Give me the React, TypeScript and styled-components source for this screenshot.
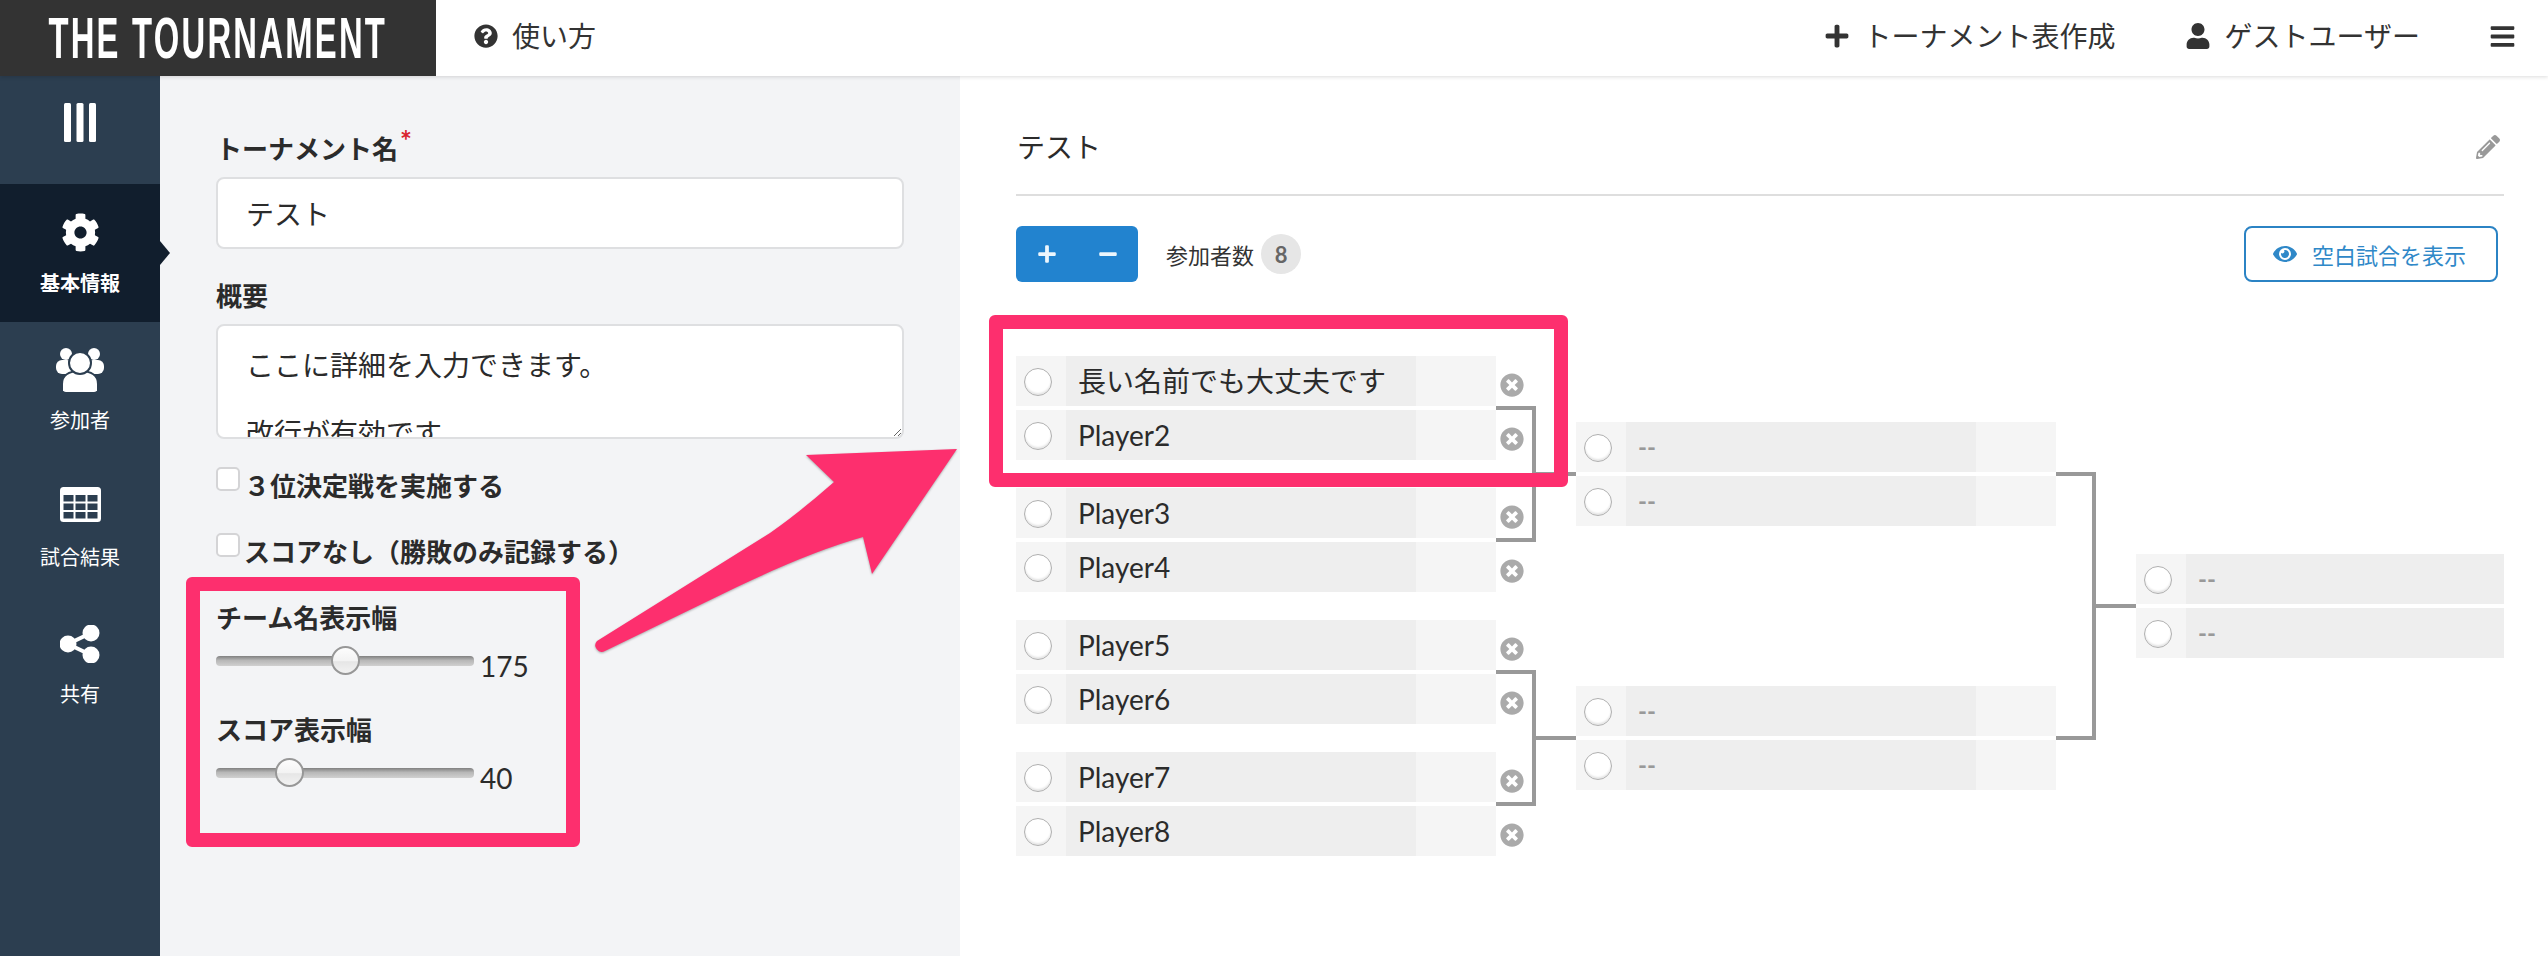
import React from "react";
import styled, { createGlobalStyle } from "styled-components";
import {
  FaBars,
  FaCog,
  FaEye,
  FaMinus,
  FaPencilAlt,
  FaPlus,
  FaQuestionCircle,
  FaTimesCircle,
  FaUser,
} from "react-icons/fa";

const PINK = "#fd2f6e";
const FONT = `Lato, "Noto Sans CJK JP", sans-serif`;

const GlobalStyle = createGlobalStyle`
  html, body {
    margin: 0;
    padding: 0;
    background: #fff;
  }
  body {
    font-family: ${FONT};
    color: #2b2b2b;
  }
  * {
    box-sizing: border-box;
  }
`;

function UsersIcon() {
  return (
    <svg width="48" height="44" viewBox="0 0 48 44" fill="#fff">
      <circle cx="10" cy="6" r="6" />
      <circle cx="38" cy="6" r="6" />
      <rect x="0" y="12" width="17" height="14" rx="6" />
      <rect x="31" y="12" width="17" height="14" rx="6" />
      <path
        d="M6 44V36C6 28 12 23 24 23S42 28 42 36V44Z"
        stroke="#2c3e50"
        strokeWidth="2"
      />
      <rect x="7" y="37" width="34" height="7" rx="3" />
      <circle cx="24" cy="15" r="11" stroke="#2c3e50" strokeWidth="2" />
    </svg>
  );
}

function TableIcon() {
  return (
    <svg width="41" height="44" viewBox="0 0 41 44">
      <rect x="0" y="2" width="41" height="35" rx="3.5" fill="#fff" />
      <g fill="#2c3e50">
        <rect x="3.5" y="10" width="10" height="6.5" />
        <rect x="15.5" y="10" width="10" height="6.5" />
        <rect x="27.5" y="10" width="10" height="6.5" />
        <rect x="3.5" y="18.5" width="10" height="6.5" />
        <rect x="15.5" y="18.5" width="10" height="6.5" />
        <rect x="27.5" y="18.5" width="10" height="6.5" />
        <rect x="3.5" y="27" width="10" height="6.5" />
        <rect x="15.5" y="27" width="10" height="6.5" />
        <rect x="27.5" y="27" width="10" height="6.5" />
      </g>
    </svg>
  );
}

function ShareIcon() {
  return (
    <svg width="40" height="38" viewBox="0 0 40 38" fill="#fff">
      <path d="M31 8L8 19L31 30" fill="none" stroke="#fff" strokeWidth="4" />
      <circle cx="31" cy="8" r="8.5" />
      <circle cx="8" cy="19" r="8.5" />
      <circle cx="31" cy="30" r="8.5" />
    </svg>
  );
}

function ColumnsIcon() {
  return (
    <svg width="32" height="39" viewBox="0 0 32 39" fill="#fff">
      <rect x="0" width="7" height="39" rx="1.5" />
      <rect x="12.5" width="7" height="39" rx="1.5" />
      <rect x="25" width="7" height="39" rx="1.5" />
    </svg>
  );
}

const NAV_ITEMS = [
  { label: "基本情報", icon: <FaCog size={39} />, active: true },
  { label: "参加者", icon: <UsersIcon /> },
  { label: "試合結果", icon: <TableIcon /> },
  { label: "共有", icon: <ShareIcon /> },
];

const ROUNDS = [
  {
    matches: [
      ["長い名前でも大丈夫です", "Player2"],
      ["Player3", "Player4"],
      ["Player5", "Player6"],
      ["Player7", "Player8"],
    ],
  },
  {
    matches: [
      ["--", "--"],
      ["--", "--"],
    ],
  },
  { matches: [["--", "--"]], final: true },
];

function Row({
  name,
  first,
  final,
}: {
  name: string;
  first?: boolean;
  final?: boolean;
}) {
  return (
    <TeamRow>
      <SeedCell>
        <Radio />
      </SeedCell>
      <NameCell $final={final} $empty={name === "--"}>
        {name}
      </NameCell>
      {!final && <ScoreCell />}
      {first && (
        <RemoveButton>
          <FaTimesCircle size={24} />
        </RemoveButton>
      )}
    </TeamRow>
  );
}

function Links({ count }: { count: number }) {
  return (
    <LinkColumn>
      {Array.from({ length: count }).map((_, i) => (
        <LinkSlot key={i}>
          <Fork $height={528 / count / 2 + 4} />
          <Stem />
        </LinkSlot>
      ))}
    </LinkColumn>
  );
}

export default function App() {
  return (
    <>
      <GlobalStyle />
      <Page>
        <Header>
          <Logo>
            <LogoText>THE TOURNAMENT</LogoText>
          </Logo>
          <HeaderNav>
            <HeaderLink>
              <FaQuestionCircle size={24} />
              使い方
            </HeaderLink>
            <HeaderRight>
              <HeaderLink>
                <FaPlus size={26} />
                トーナメント表作成
              </HeaderLink>
              <HeaderLink>
                <FaUser size={26} />
                ゲストユーザー
              </HeaderLink>
              <HeaderLink>
                <FaBars size={27} />
              </HeaderLink>
            </HeaderRight>
          </HeaderNav>
        </Header>

        <Body>
          <Sidebar>
            <SidebarToggle>
              <ColumnsIcon />
            </SidebarToggle>
            {NAV_ITEMS.map((item) => (
              <NavItem key={item.label} $active={item.active}>
                <NavIcon>{item.icon}</NavIcon>
                <NavLabel $active={item.active}>{item.label}</NavLabel>
              </NavItem>
            ))}
          </Sidebar>

          <FormPanel>
            <FieldLabel>
              トーナメント名<Required>*</Required>
            </FieldLabel>
            <TextInput defaultValue="テスト" />
            <FieldLabel $top={29}>概要</FieldLabel>
            <TextArea
              defaultValue={"ここに詳細を入力できます。\n\n改行が有効です。"}
            />
            <CheckRow $top={28}>
              <CheckBox />
              <CheckText>３位決定戦を実施する</CheckText>
            </CheckRow>
            <CheckRow $top={42}>
              <CheckBox />
              <CheckText>スコアなし（勝敗のみ記録する）</CheckText>
            </CheckRow>
            <FieldLabel $top={43}>チーム名表示幅</FieldLabel>
            <SliderRow>
              <Slider type="range" min={50} max={300} defaultValue={175} />
              <SliderValue>175</SliderValue>
            </SliderRow>
            <FieldLabel $top={16}>スコア表示幅</FieldLabel>
            <SliderRow>
              <Slider type="range" min={20} max={98} defaultValue={40} />
              <SliderValue>40</SliderValue>
            </SliderRow>
          </FormPanel>

          <BoardPanel>
            <TitleRow>
              <Title>テスト</Title>
              <EditIcon>
                <FaPencilAlt size={24} />
              </EditIcon>
            </TitleRow>
            <Toolbar>
              <CountButtons>
                <CountButton>
                  <FaPlus size={20} />
                </CountButton>
                <CountButton>
                  <FaMinus size={20} />
                </CountButton>
              </CountButtons>
              <CountLabel>参加者数</CountLabel>
              <CountBadge>8</CountBadge>
              <GhostButton>
                <FaEye size={24} />
                空白試合を表示
              </GhostButton>
            </Toolbar>
            <Bracket>
              {ROUNDS.map((round, r) => (
                <React.Fragment key={r}>
                  <RoundColumn $final={round.final}>
                    {round.matches.map((match, m) => (
                      <MatchSlot key={m}>
                        <Match>
                          {match.map((name, t) => (
                            <Row
                              key={t}
                              name={name}
                              first={r === 0}
                              final={round.final}
                            />
                          ))}
                        </Match>
                      </MatchSlot>
                    ))}
                  </RoundColumn>
                  {!round.final && <Links count={round.matches.length / 2} />}
                </React.Fragment>
              ))}
            </Bracket>
          </BoardPanel>
        </Body>

        <SliderFrame />
        <BracketFrame />
        <ArrowMark viewBox="590 440 375 220" width="375" height="220">
          <path
            d="M957 449L806 455L834 482Q800 512 770 533L597 641A6.5 6.5 0 0 0 605 651L737 587Q810 552 863 537L872 574Z"
            fill={PINK}
          />
        </ArrowMark>
      </Page>
    </>
  );
}

const Page = styled.div`
  position: relative;
  display: flex;
  flex-direction: column;
  width: 2548px;
  height: 956px;
  overflow: hidden;
`;

const Header = styled.header`
  position: relative;
  z-index: 2;
  display: flex;
  flex: 0 0 76px;
  background: #fff;
  box-shadow: 0 1px 4px rgba(0, 0, 0, 0.14);
`;

const Logo = styled.div`
  display: flex;
  align-items: center;
  justify-content: center;
  flex: 0 0 436px;
  background: #333;
  overflow: hidden;
`;

const LogoText = styled.span`
  display: inline-block;
  font-family: "Liberation Sans", sans-serif;
  font-size: 58px;
  font-weight: 700;
  line-height: 76px;
  letter-spacing: 4px;
  color: #fff;
  white-space: nowrap;
  transform: scaleX(0.565);
`;

const HeaderNav = styled.nav`
  display: flex;
  flex: 1;
  align-items: center;
  justify-content: space-between;
  padding: 0 32px 4px 38px;
`;

const HeaderRight = styled.div`
  display: flex;
  align-items: center;
  gap: 69px;
`;

const HeaderLink = styled.a`
  display: flex;
  align-items: center;
  gap: 14px;
  font-size: 28px;
  line-height: 40px;
  color: #333;
`;

const Body = styled.div`
  display: flex;
  flex: 1;
  min-height: 0;
`;

const Sidebar = styled.aside`
  flex: 0 0 160px;
  background: #2c3e50;
`;

const SidebarToggle = styled.div`
  display: flex;
  justify-content: center;
  height: 108px;
  padding-top: 27px;
`;

const NavItem = styled.div<{ $active?: boolean }>`
  position: relative;
  display: flex;
  flex-direction: column;
  align-items: center;
  height: ${(p) => (p.$active ? 138 : 137)}px;
  padding-top: 26px;
  color: #fff;
  background: ${(p) => (p.$active ? "#111e2d" : "transparent")};

  ${(p) =>
    p.$active &&
    `
    &::after {
      content: "";
      position: absolute;
      top: 57px;
      right: -10px;
      border-style: solid;
      border-width: 12px 0 12px 10px;
      border-color: transparent transparent transparent #111e2d;
    }
  `}
`;

const NavIcon = styled.div`
  display: flex;
  align-items: center;
  justify-content: center;
  height: 44px;
`;

const NavLabel = styled.div<{ $active?: boolean }>`
  margin-top: ${(p) => (p.$active ? 15 : 14)}px;
  font-size: 20px;
  font-weight: ${(p) => (p.$active ? 700 : 400)};
  line-height: 28px;
`;

const FormPanel = styled.section`
  flex: 0 0 800px;
  padding: 55px 56px 0;
  background: #f3f4f6;
`;

const FieldLabel = styled.label<{ $top?: number }>`
  display: block;
  margin-top: ${(p) => p.$top ?? 0}px;
  margin-bottom: 10px;
  font-size: 26px;
  font-weight: 700;
  line-height: 36px;
  color: #2b2b2b;
`;

const Required = styled.sup`
  position: relative;
  top: 2px;
  margin-left: 2px;
  font-size: 28px;
  font-weight: 700;
  line-height: 0;
  vertical-align: super;
  color: #d9232d;
`;

const TextInput = styled.input`
  display: block;
  width: 100%;
  height: 72px;
  padding: 0 28px;
  border: 2px solid #dedfe1;
  border-radius: 8px;
  outline: none;
  background: #fff;
  font-family: ${FONT};
  font-size: 28px;
  color: #2b2b2b;
`;

const TextArea = styled.textarea`
  display: block;
  width: 100%;
  height: 115px;
  padding: 22px 28px 0;
  border: 2px solid #dedfe1;
  border-radius: 8px;
  outline: none;
  background: #fff;
  overflow: hidden;
  font-family: ${FONT};
  font-size: 28px;
  line-height: 34px;
  color: #2b2b2b;
`;

const CheckRow = styled.div<{ $top: number }>`
  display: flex;
  align-items: flex-start;
  height: 24px;
  margin-top: ${(p) => p.$top}px;
`;

const CheckBox = styled.span`
  flex: 0 0 24px;
  height: 24px;
  border: 2px solid #d4d4d6;
  border-radius: 5px;
  background: #fff;
`;

const CheckText = styled.span`
  margin: 1px 0 0 4px;
  font-size: 26px;
  font-weight: 700;
  line-height: 36px;
  white-space: nowrap;
  color: #2b2b2b;
`;

const SliderRow = styled.div`
  display: flex;
  align-items: flex-start;
  height: 50px;
  gap: 6px;
`;

const Slider = styled.input`
  flex: 0 0 258px;
  width: 258px;
  height: 30px;
  margin: 0;
  background: transparent;
  appearance: none;
  -webkit-appearance: none;

  &::-webkit-slider-runnable-track {
    height: 10px;
    border-radius: 4px;
    background: linear-gradient(#808080, #b8b8b8 45%, #d0d0d0);
  }

  &::-webkit-slider-thumb {
    -webkit-appearance: none;
    width: 29px;
    height: 29px;
    margin-top: -10px;
    border: 2px solid #979797;
    border-radius: 50%;
    background: linear-gradient(#fdfdfd, #f3f3f3 50%, #e6e6e6 55%, #f2f2f2);
  }
`;

const SliderValue = styled.span`
  margin-top: 2px;
  font-size: 28px;
  line-height: 36px;
  color: #2b2b2b;
`;

const BoardPanel = styled.main`
  flex: 1;
  padding: 53px 44px 0 56px;
  background: #fff;
`;

const TitleRow = styled.div`
  display: flex;
  align-items: center;
  justify-content: space-between;
  padding-bottom: 29px;
  border-bottom: 2px solid #dedede;
`;

const Title = styled.h1`
  margin: 0;
  padding-left: 1px;
  font-size: 28px;
  font-weight: 400;
  line-height: 36px;
  color: #2b2b2b;
`;

const EditIcon = styled.span`
  display: flex;
  margin-right: 4px;
  color: #999;
`;

const Toolbar = styled.div`
  display: flex;
  align-items: center;
  height: 56px;
  margin-top: 30px;
`;

const CountButtons = styled.div`
  display: flex;
  width: 122px;
  height: 56px;
  border-radius: 6px;
  background: #2283cf;
  color: #ecf6fd;
`;

const CountButton = styled.span`
  display: flex;
  flex: 1;
  align-items: center;
  justify-content: center;
`;

const CountLabel = styled.span`
  margin-left: 28px;
  font-size: 22px;
  color: #333;
`;

const CountBadge = styled.span`
  display: flex;
  align-items: center;
  justify-content: center;
  width: 40px;
  height: 40px;
  margin-left: 7px;
  border-radius: 50%;
  background: #e6e6e6;
  font-size: 22px;
  font-weight: 700;
  color: #666;
`;

const GhostButton = styled.span`
  display: flex;
  align-items: center;
  gap: 15px;
  height: 56px;
  margin-left: auto;
  margin-right: 6px;
  padding: 0 30px 0 27px;
  border: 2px solid #2b83c4;
  border-radius: 8px;
  font-size: 22px;
  color: #2f88c8;
`;

const Bracket = styled.div`
  display: flex;
  height: 528px;
  margin-top: 60px;
`;

const RoundColumn = styled.div<{ $final?: boolean }>`
  display: flex;
  flex-direction: column;
  flex: 0 0 ${(p) => (p.$final ? 368 : 480)}px;
`;

const MatchSlot = styled.div`
  display: flex;
  flex: 1;
  align-items: center;
`;

const Match = styled.div`
  display: flex;
  flex-direction: column;
  gap: 4px;
  width: 100%;
`;

const TeamRow = styled.div`
  position: relative;
  z-index: 1;
  display: flex;
  height: 50px;
`;

const SeedCell = styled.div`
  display: flex;
  flex: 0 0 50px;
  align-items: center;
  padding: 2px 0 0 8px;
  background: #f5f5f5;
`;

const Radio = styled.span`
  width: 28px;
  height: 28px;
  border: 1.5px solid #b0b0b0;
  border-radius: 50%;
  background: #fff;
  box-shadow: inset 0 -2px 2px rgba(0, 0, 0, 0.1);
`;

const NameCell = styled.div<{ $final?: boolean; $empty?: boolean }>`
  flex: ${(p) => (p.$final ? 1 : "0 0 350px")};
  padding-left: 12px;
  background: #eee;
  font-size: ${(p) => (p.$empty ? 24 : 28)}px;
  font-weight: ${(p) => (p.$empty ? 700 : 400)};
  line-height: 50px;
  color: ${(p) => (p.$empty ? "#999" : "#2b2b2b")};
  white-space: nowrap;
`;

const ScoreCell = styled.div`
  flex: 0 0 80px;
  background: #f5f5f5;
`;

const RemoveButton = styled.span`
  position: absolute;
  top: 17px;
  right: -28px;
  display: flex;
  color: #aaa;
`;

const LinkColumn = styled.div`
  display: flex;
  flex-direction: column;
  flex: 0 0 80px;
`;

const LinkSlot = styled.div`
  display: flex;
  flex: 1;
  align-items: center;
`;

const Fork = styled.div<{ $height: number }>`
  width: 40px;
  height: ${(p) => p.$height}px;
  border: 4px solid #999;
  border-left: none;
`;

const Stem = styled.div`
  width: 40px;
  height: 4px;
  background: #999;
`;

const AnnotationFrame = styled.div`
  position: absolute;
  z-index: 3;
  border: 14px solid ${PINK};
  border-radius: 6px;
  pointer-events: none;
`;

const SliderFrame = styled(AnnotationFrame)`
  left: 186px;
  top: 577px;
  width: 394px;
  height: 270px;
`;

const BracketFrame = styled(AnnotationFrame)`
  left: 989px;
  top: 315px;
  width: 579px;
  height: 172px;
`;

const ArrowMark = styled.svg`
  position: absolute;
  z-index: 3;
  left: 590px;
  top: 440px;
  filter: drop-shadow(0 1px 1px rgba(0, 0, 0, 0.3));
`;
